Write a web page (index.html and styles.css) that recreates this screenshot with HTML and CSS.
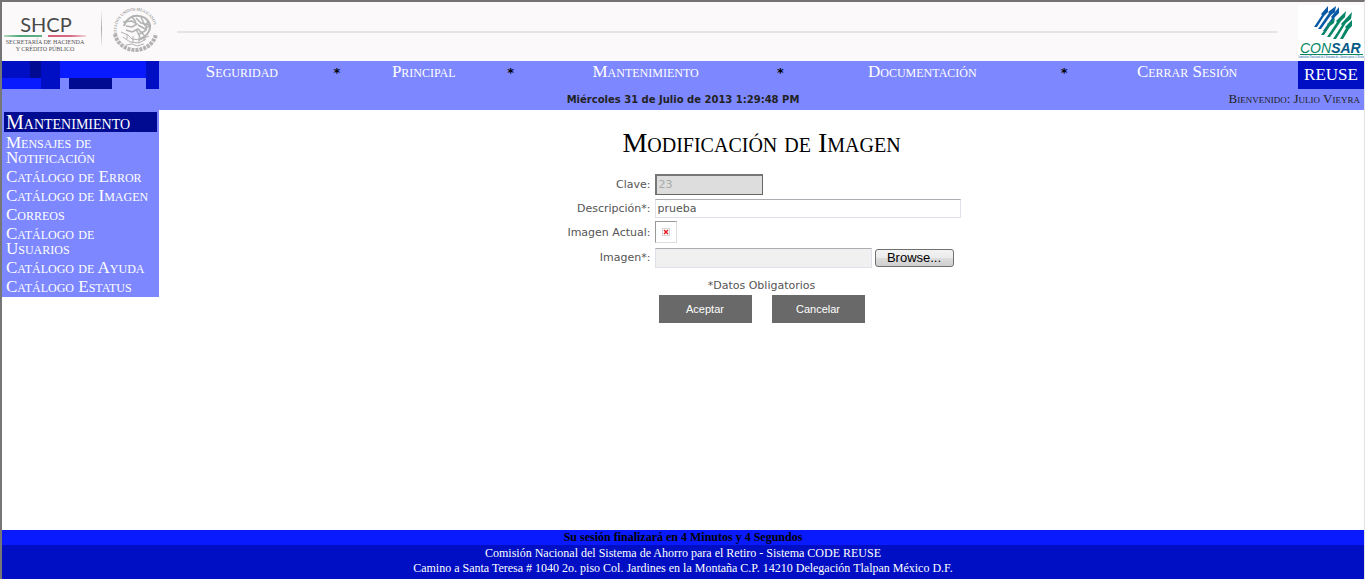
FILE: index.html
```html
<!DOCTYPE html>
<html lang="es">
<head>
<meta charset="utf-8">
<title>Modificación de Imagen</title>
<link rel="stylesheet" href="styles.css">
</head>
<body>
<div class="page">
  <header class="brand">
    <svg class="shcp" width="157" height="59" viewBox="2 2 157 59" role="img" aria-label="SHCP">
      <defs>
        <linearGradient id="g" x1="0" x2="1"><stop offset="0" stop-color="#9fd0b2"/><stop offset=".4" stop-color="#23945a"/><stop offset="1" stop-color="#3a9d69"/></linearGradient>
        <linearGradient id="r" x1="0" x2="1"><stop offset="0" stop-color="#c9375a"/><stop offset=".6" stop-color="#cf4766"/><stop offset="1" stop-color="#f3cfd6"/></linearGradient>
        <linearGradient id="v" x1="0" x2="0" y1="0" y2="1"><stop offset="0" stop-color="#fbf9fa"/><stop offset=".5" stop-color="#aaa"/><stop offset="1" stop-color="#fbf9fa"/></linearGradient>
        <path id="ring" d="M117 34A19 19 0 1 1 154 34"/>
      </defs>
      <text class="shcp-name" x="46" y="32" text-anchor="middle">SHCP</text>
      <rect x="4" y="35" width="38" height="2" fill="url(#g)" opacity=".8"/>
      <rect x="48" y="35" width="38" height="2" fill="url(#r)" opacity=".8"/>
      <text class="shcp-sub" x="45" y="44" text-anchor="middle">SECRETARÍA DE HACIENDA</text>
      <text class="shcp-sub" x="45" y="51" text-anchor="middle">Y CRÉDITO PÚBLICO</text>
      <rect x="101" y="10" width="1" height="38" fill="url(#v)"/>
      <g fill="none" stroke="#b2b2b2">
        <path d="M115 34c2 10 11 16 20.500 16s18.500-6 20.500-16" stroke-width="4" stroke-dasharray="3 1"/>
        <path d="M124 26c2-7 8-11 15-10 9 1 13 9 10 15-2 5-6 7-10 8" stroke-width="2"/>
        <path d="M123 22l9-1 5 3-5 3-6-1M136 18l5 5 8 2M132 17l4 5M141 17l4 9M148 20l-3 11-6 3M138 25l9 5M126 30l6 2 6-3 6 6M151 25l-6 4M136 29l4 8" stroke-width="1.500"/>
        <path d="M121 32l7 3 4 4 8 1 9-4M123 37l7 5 9 1 7-4M127 34v5M133 36v7M139 37v6M144 35v6M126 45l6-1 5 2 7-2" stroke-width="1"/>
      </g>
      <text class="seal-text"><textPath href="#ring">ESTADOS UNIDOS MEXICANOS</textPath></text>
    </svg>
    <div class="rule"></div>
    <svg class="consar" width="66" height="59" viewBox="1298 2 66 59" role="img" aria-label="CONSAR">
      <rect x="1298" y="5" width="66" height="56" fill="#fff"/>
      <path fill="#075aa5" d="M1314 27l8-12-1-1 7-8v6l-4 4-7 11zM1318 29l11-16-1-1 8-6-1 6-4 3-10 14zM1323 31l9-13-1-1 8-10v6l-4 4-9 14z"/>
      <path fill="#078667" d="M1321 35l7-10-1-1 8-6-1 5-4 3-6 9zM1327 37l10-15-1-1 10-10-1 6-4 4-11 16zM1333 39l9-14-1-1 11-12-1 7-5 4-10 16zM1340 39l6-11-1-1 7-7v6l-3 3-6 10z"/>
      <text x="1300" y="53" class="consar-name"><tspan class="con">CON</tspan><tspan class="sar">SAR</tspan></text>
      <rect x="1300" y="54" width="63" height="1" fill="#078667"/>
      <text x="1331" y="58" text-anchor="middle" class="consar-sub">Comisión Nacional del Sistema de Ahorro para el Retiro</text>
    </svg>
  </header>

  <div class="bar">
    <svg class="blocks" width="157" height="28" viewBox="0 0 157 28" shape-rendering="crispEdges" aria-hidden="true">
      <path fill="#000fc4" d="M0 0h58v28H39V17H0zM144 0h13v28h-13z"/>
      <path fill="#000b91" d="M28 0h11v17H28zM67 17h43v11H67z"/>
      <path fill="#0a1aff" d="M58 0h86v17H58zM0 17h39v11H0z"/>
    </svg>
    <nav class="menu">
      <a href="#">Seguridad</a><span class="star">*</span>
      <a href="#">Principal</a><span class="star">*</span>
      <a href="#">Mantenimiento</a><span class="star">*</span>
      <a href="#">Documentación</a><span class="star">*</span>
      <a href="#">Cerrar Sesión</a>
    </nav>
    <div class="system">REUSE</div>
  </div>
  <div class="status">
    <span></span>
    <strong class="date">Miércoles 31 de Julio de 2013 1:29:48 PM</strong>
    <span class="welcome">Bienvenido: Julio Vieyra</span>
  </div>

  <div class="body">
    <aside class="side">
      <h2>Mantenimiento</h2>
      <a href="#">Mensajes de Notificación</a>
      <a href="#">Catálogo de Error</a>
      <a href="#">Catálogo de Imagen</a>
      <a href="#">Correos</a>
      <a href="#">Catálogo de Usuarios</a>
      <a href="#">Catálogo de Ayuda</a>
      <a href="#">Catálogo Estatus</a>
    </aside>
    <main class="main">
      <h1>Modificación de Imagen</h1>
      <form class="form">
        <div class="fields">
          <label for="clave">Clave:</label>
          <div><input id="clave" class="key" type="text" value="23" disabled></div>
          <label for="desc">Descripción*:</label>
          <div><input id="desc" class="desc" type="text" value="prueba"></div>
          <span class="label">Imagen Actual:</span>
          <div class="picture">
            <svg width="10" height="10" viewBox="0 0 10 10" role="img" aria-label="Imagen no disponible"><rect x="1.500" y="1.500" width="7" height="7" fill="#fff" stroke="#d5d5d5"/><path d="M3 3l4 4M7 3L3 7" stroke="#e02020" stroke-width="1.500"/></svg>
          </div>
          <label for="img">Imagen*:</label>
          <div class="file"><input id="img" class="path" type="text" readonly><button type="button" class="browse">Browse...</button></div>
        </div>
        <p class="note">*Datos Obligatorios</p>
        <div class="actions"><button type="button">Aceptar</button><button type="button">Cancelar</button></div>
      </form>
    </main>
  </div>

  <footer class="footer">
    <div class="session">Su sesión finalizará en 4 Minutos y 4 Segundos</div>
    <div class="address">Comisión Nacional del Sistema de Ahorro para el Retiro - Sistema CODE REUSE<br>Camino a Santa Teresa # 1040 2o. piso Col. Jardines en la Montaña C.P. 14210 Delegación Tlalpan México D.F.</div>
  </footer>
</div>
</body>
</html>
```
FILE: styles.css
```css
* { box-sizing: border-box; }
body { margin: 0; font-family: "DejaVu Sans", Verdana, sans-serif; font-size: 11px; color: #555; background: #fff; }
.page { min-height: 100vh; display: flex; flex-direction: column; border-top: 2px solid #767172; border-left: 2px solid #767676; border-right: 1px solid #e3e3e3; }
a { color: #fff; text-decoration: none; }

.brand { display: flex; align-items: center; background: #fbf9fa; height: 59px; }
.brand svg { display: block; flex: none; }
.rule { flex: 1; height: 2px; margin: 0 21px 0 18px; background: #e6e4e5; }
.shcp-name { font: 20px Lato, sans-serif; fill: #4a4a4a; }
.shcp-sub { font: 6px "Liberation Serif", serif; fill: #555; }
.seal-text { font: 4px "Liberation Serif", serif; fill: #777; }
.consar-name { font: italic bold 14px "Liberation Sans", sans-serif; }
.con { fill: #078667; font-weight: normal; }
.sar { fill: #075a85; }
.consar-sub { font: 3px "Liberation Serif", serif; fill: #075aa5; }

.bar { display: flex; background: #7d87ff; height: 28px; }
.blocks { flex: none; }
.menu { flex: 1; display: grid; grid-template-columns: 166fr 24fr 150fr 24fr 246fr 24fr 260fr 24fr 222fr; text-align: center; font: small-caps 17px/22px "Liberation Serif", serif; }
.star { color: #000; font-family: "DejaVu Sans", sans-serif; font-size: 13px; font-weight: bold; line-height: 24px; }
.system { width: 66px; background: #000fc4; color: #fff; text-align: center; font: 17px/28px "Liberation Serif", serif; }
.status { display: grid; grid-template-columns: 1fr auto 1fr; background: #7d87ff; height: 21px; line-height: 21px; color: #222; }
.date { font-size: 10px; }
.welcome { text-align: right; padding-right: 4px; font: small-caps 13px/20px "Liberation Serif", serif; }

.body { flex: 1; display: flex; align-items: flex-start; }
.side { width: 157px; flex: none; background: #7d87ff; padding: 2px 2px 0; font: small-caps 17px/15px "Liberation Serif", serif; }
.side h2 { margin: 0 0 2px; padding-left: 2px; background: #000b91; color: #fff; font-size: 20px; font-weight: normal; line-height: 20px; }
.side a { display: block; padding: 1px 8px 3px 2px; }

.main { flex: 1; padding-top: 18px; }
h1 { margin: 0 0 14px; text-align: center; font: small-caps 28px/30px "Liberation Serif", serif; color: #000; }
.form { display: flex; flex-direction: column; align-items: center; }
.fields { display: grid; grid-template-columns: 88px 306px; grid-template-rows: 24px 24px 24px 27px; align-items: center; column-gap: 4px; }
.fields label, .label { text-align: right; }
input { display: block; font: 11px "DejaVu Sans", Verdana, sans-serif; color: #555; padding: 0 2px; height: 19px; border: 1px solid #dfe0e8; border-top-color: #abadb3; }
.key { width: 108px; height: 21px; border-width: 2px 1px 1px 2px; border-style: solid; border-color: #777 #666 #666 #777; background: #ddd; color: #aaa; }
.desc { width: 306px; }
.picture { width: 22px; height: 22px; display: grid; place-items: center; border: 1px solid #ddd; border-top-color: #999; border-left-color: #999; }
.file { display: flex; align-items: center; gap: 3px; }
.path { width: 217px; height: 20px; background: #f0f0f0; }
.browse { width: 79px; height: 18px; padding: 0; border: 1px solid #707070; border-radius: 3px; background: linear-gradient(#f3f3f3, #ebebeb 50%, #ddd 50%, #cfcfcf); font: 13px/16px "Liberation Sans", sans-serif; color: #000; }
.note { margin: 8px 0 2px; line-height: 14px; }
.actions { display: flex; gap: 20px; }
.actions button { width: 93px; height: 28px; padding: 0; border: 0; background: #696969; color: #fff; font: 11px "Liberation Sans", sans-serif; }

.footer { text-align: center; font: 12px/15px "Liberation Serif", serif; }
.session { background: #0a1aff; color: #000; font-weight: bold; }
.address { background: #000fc4; color: #fff; padding: 1px 0 3px; }
```
